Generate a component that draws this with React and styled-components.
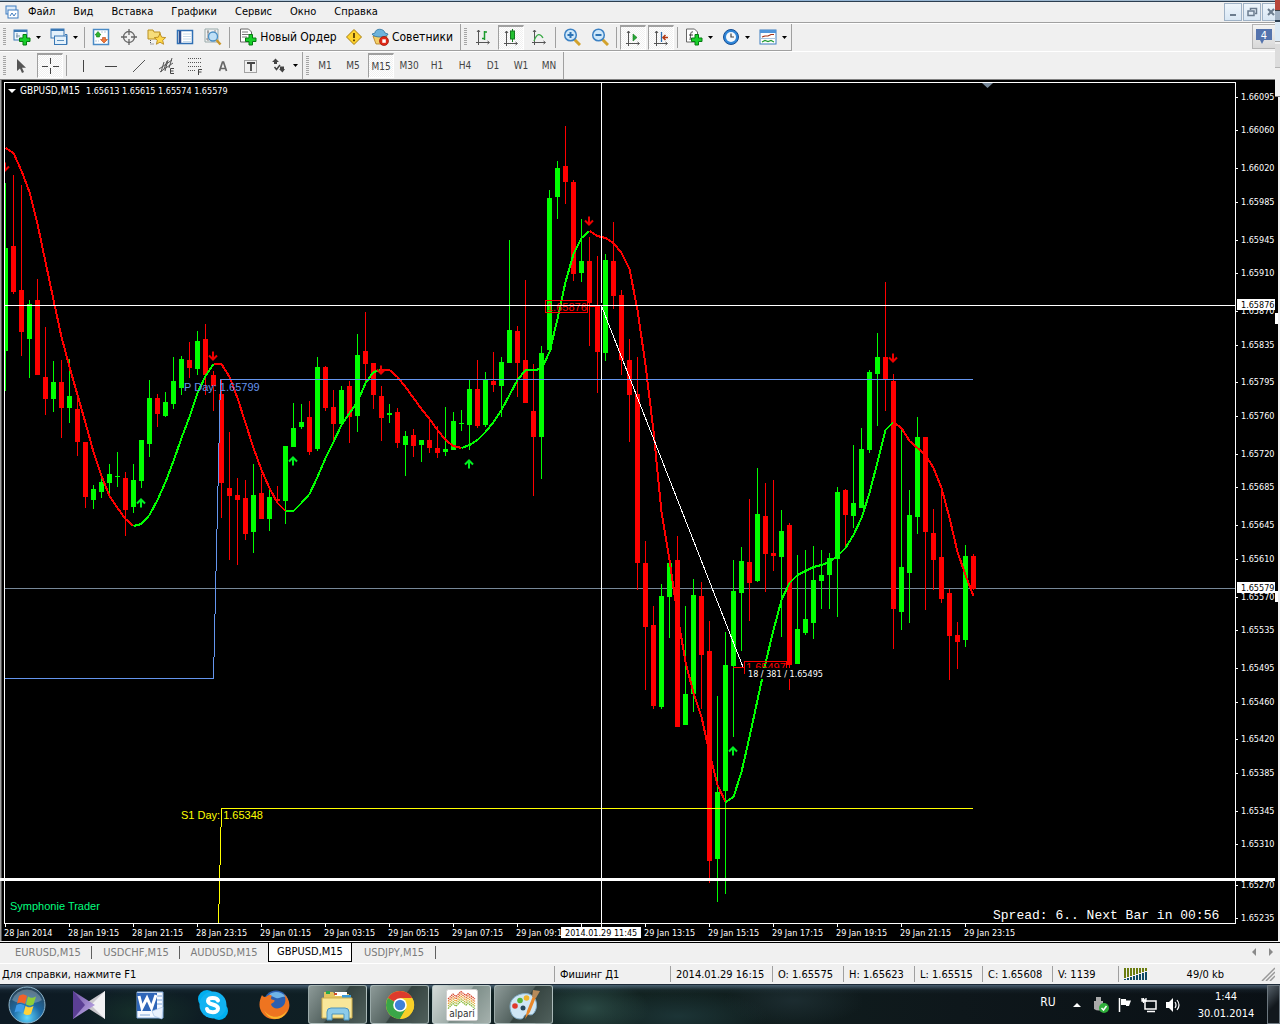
import React from "react";
import styled, { createGlobalStyle, css } from "styled-components";

const UI = '"DejaVu Sans Condensed", "DejaVu Sans", "Noto Sans", sans-serif';
const ARIAL = '"Liberation Sans", Arial, sans-serif';
const MONO = '"Liberation Mono", "Courier New", monospace';

const GlobalStyle = createGlobalStyle`
  *, *::before, *::after { box-sizing: border-box; }
  body { margin: 0; background: #fff; font-family: ${UI}; font-size: 11px; color: #000; }
  button { font: inherit; color: inherit; border: 0; padding: 0; margin: 0; background: none; }
  svg { display: block; flex: none; }
`;

/* ---------- window frame ---------- */

const Desktop = styled.div`
  display: flex;
  flex-direction: column;
  position: relative;
  background: #f0f0f0;
  overflow: hidden;
`;

/* Sliver of the window behind, showing past the right edge. */
const BackWindowEdge = styled.div`
  position: absolute;
  top: 0;
  right: 0;
  width: 5px;
  height: 97px;
  border-bottom: 1px solid #808080;
  background:
    linear-gradient(#b8473c 0 10px, #3a3f45 10px 11px, #9fb0c2 11px 20px, #2c3e50 20px 22px,
      #dbe9f5 22px 41px, #a0a0a0 41px 42px, #f0f0f0 42px 44px, #dcdcdc 44px 67px, #b4b4b4 67px 68px, #f0f0f0 68px);
`;

const TitleEdge = styled.div`
  height: 2px;
  background: linear-gradient(90deg, #9db4c9, #b9cfe2 30%, #8fb3d6 60%, #a9bccb);
  border-bottom: 1px solid #2c3e50;
`;

const MenuBar = styled.nav`
  display: flex;
  align-items: center;
  height: 21px;
  padding-left: 5px;
  border-bottom: 1px solid #a0a0a0;
`;

const MenuItem = styled.button`
  padding: 0 9px;
  line-height: 18px;
  white-space: nowrap;
`;

const MdiButtons = styled.div`
  display: flex;
  gap: 1px;
  margin-left: auto;
`;

const MdiButton = styled.button`
  display: grid;
  place-items: center;
  width: 18px;
  height: 18px;
  border: 1px solid #9fb2c6;
  background: linear-gradient(#eef5fb, #d9e7f4);
`;

/* ---------- toolbars ---------- */

const ToolbarRow = styled.div`
  display: flex;
  justify-content: space-between;
  height: 28px;
  border-top: 1px solid #fff;
`;

const ToolbarGroup = styled.div`
  display: flex;
  align-items: center;
  height: 27px;
  padding-left: 8px;
  border-right: 1px solid #a0a0a0;
  border-bottom: ${(p) => (p.$underlined ? "1px solid #a0a0a0" : "0")};
  position: relative;
  &::before {
    content: "";
    position: absolute;
    left: 3px;
    top: 4px;
    bottom: 4px;
    width: 3px;
    background: repeating-linear-gradient(#a5a5a5 0 1px, transparent 1px 2px);
  }
`;

const Groups = styled.div`
  display: flex;
`;

const pressed = css`
  width: 26px;
  margin: 0 1px;
  background: repeating-conic-gradient(#fff 0 25%, #f0f0f0 0 50%) 0 0 / 2px 2px;
  border: 1px solid #fff;
  border-top: 2px solid #a0a0a0;
  border-left: 1px solid #a0a0a0;
`;

const ToolButton = styled.button`
  display: flex;
  align-items: center;
  justify-content: center;
  gap: ${(p) => (p.$labelled ? 3 : 5)}px;
  width: ${(p) => p.$width || 28}px;
  height: 25px;
  white-space: nowrap;
  font-size: ${(p) => (p.$small ? 10 : 12)}px;
  color: ${(p) => (p.$small ? "#444" : "#000")};
  ${(p) => p.$pressed && pressed}
`;

const Separator = styled.span`
  width: 1px;
  height: 21px;
  margin: 0 2px;
  background: #a0a0a0;
`;

const ChatButton = styled.button`
  display: grid;
  place-items: center;
  width: 28px;
  height: 25px;
  padding-right: 4px;
  border: 1px solid #b4b4b4;
  background: linear-gradient(#f2f2f2, #d8d8d8);
`;

/* ---------- chart window, tabs and status ---------- */

const ChartPane = styled.main`
  border-top: 1px solid #808080;
  background: #000;
  svg { width: 100%; height: auto; }
`;

const TabStrip = styled.div`
  display: flex;
  align-items: flex-start;
  height: 21px;
  padding-left: 4px;
  border-top: 1px solid #000;
`;

const Tab = styled.button`
  position: relative;
  width: ${(p) => (p.$narrow || p.$active ? 84 : 88)}px;
  height: 19px;
  line-height: 18px;
  font-size: 11px;
  white-space: nowrap;
  color: ${(p) => (p.$active ? "#000" : "#7b7b7b")};
  background: ${(p) => (p.$active ? "#fff" : "none")};
  border: ${(p) => (p.$active ? "1px solid #000" : "0")};
  border-top: 0;
  &::after {
    content: "";
    display: ${(p) => (p.$divider ? "block" : "none")};
    position: absolute;
    right: 0;
    top: 3px;
    height: 13px;
    width: 1px;
    background: #606060;
  }
`;

const TabScroll = styled.div`
  display: flex;
  gap: 11px;
  margin: 5px 6px 0 auto;
`;

const StatusBar = styled.footer`
  display: flex;
  align-items: center;
  height: 21px;
  padding-left: 2px;
  border-top: 1px solid #fff;
  font-size: 11px;
`;

const StatusCell = styled.span`
  display: flex;
  align-items: center;
  justify-content: ${(p) => (p.$end ? "flex-end" : "flex-start")};
  width: ${(p) => (p.$width ? p.$width + "px" : "auto")};
  flex: ${(p) => (p.$grow ? "1 1 0" : "none")};
  height: 16px;
  white-space: nowrap;
  border-left: ${(p) => (p.$first ? "0" : "1px solid #a0a0a0")};
  padding: 0 5px 0 ${(p) => (p.$first ? 0 : 5)}px;
`;

/* ---------- Windows taskbar ---------- */

const Taskbar = styled.div`
  display: flex;
  align-items: center;
  height: 40px;
  padding-left: 8px;
  border-top: 1px solid #1c2a38;
  color: #fff;
  background:
    linear-gradient(rgba(120, 150, 180, 0.55), rgba(60, 85, 105, 0.15) 5px, transparent 9px),
    radial-gradient(60px 30px at 46% 60%, #2b4a45, transparent),
    radial-gradient(90px 26px at 53% 80%, #1c3436, transparent),
    radial-gradient(60px 26px at 11% 70%, #16302a, transparent),
    radial-gradient(70px 26px at 62% 40%, #1c2c30, transparent),
    linear-gradient(90deg, #0d1a24, #0f2024 30%, #11211f 50%, #0e171b 75%, #0a1015);
`;

const Pinned = styled.button`
  display: grid;
  place-items: center;
  width: ${(p) => p.$width}px;
  height: 38px;
`;

const Running = styled.button`
  display: grid;
  place-items: center;
  width: 59px;
  height: 39px;
  margin-right: 3px;
  border: 1px solid rgba(200, 215, 215, 0.65);
  border-radius: 3px;
  background: ${(p) =>
    p.$active
      ? "linear-gradient(125deg, #d4dad8, #9fada9 48%, #7b8c87 50%, #a5b1ad)"
      : "linear-gradient(125deg, #8d9a98, #53625f 48%, #34423f 50%, #50605c)"};
`;

const PinnedGroup = styled.div`
  display: flex;
  margin-right: 16px;
`;

const Tray = styled.div`
  display: flex;
  align-items: center;
  margin-left: auto;
  height: 39px;
  font-size: 11px;
`;

const Language = styled.button`
  width: 26px;
  height: 24px;
  margin: 0 4px 6px 0;
  font-size: 12px;
`;

const TrayIcon = styled.button`
  display: grid;
  place-items: center;
  width: 24px;
  height: 24px;
`;

const Clock = styled.time`
  width: 82px;
  line-height: 17px;
  text-align: center;
  white-space: nowrap;
`;

const ShowDesktop = styled.button`
  width: 13px;
  height: 39px;
  border: 1px solid #6d7880;
  background: linear-gradient(135deg, #56616a, #12181d 55%);
`;

/* ---------- toolbar icons ---------- */

const Caret = () => (
  <svg width="5" height="3" viewBox="0 0 5 3"><path d="M0 0h5L2.500 3z" fill="#000" /></svg>
);
const Plus = ({ x, y }) => (
  <path transform={`translate(${x} ${y})`} d="M4 .5h3.500V4H11v3.500H7.500V11H4V7.500H.5V4H4z" fill="#18d02a" stroke="#067a12" />
);
const S = ({ w = 18, h = 18, children }) => (
  <svg width={w} height={h} viewBox={`0 0 ${w} ${h}`} fill="none">{children}</svg>
);
const Axes = () => (
  <path d="M4.500 2v15M2 14.500h13M3 4l1.500-2L6 4M13.500 13l2 1.500-2 1.500" stroke="#555" />
);
const icons = {
  newChart: <S><rect x="1" y="2" width="13" height="10" fill="#eef6fd" stroke="#3a78b5" /><path d="M1 3h13" stroke="#3a78b5" strokeWidth="2" /><path d="M4 5v5M3 8h4" stroke="#7a93a8" /><Plus x={6} y={6} /></S>,
  profiles: <S><path d="M15 6.500h2v10H5V11" stroke="#3a78b5" /><rect x="1" y="1" width="13" height="9" fill="#e4f1fb" stroke="#3a78b5" /><path d="M1 2h13" stroke="#3a78b5" strokeWidth="2" /><rect x="4.500" y="8" width="12" height="8.500" fill="#e4f1fb" stroke="#3a78b5" /><path d="M7 12.500h7" stroke="#5a8fbe" /></S>,
  market: <S><rect x="1.500" y="1.500" width="15" height="15" fill="#fff" stroke="#4a8bc6" strokeWidth="1.500" /><path d="M6 3.500L9 7H7.500v2H4.500V7H3z" fill="#2fb52f" stroke="#158015" strokeWidth=".6" /><path d="M12 15l-3.500-3.500h2v-2h3v2h2z" fill="#f0793a" stroke="#b84312" strokeWidth=".6" /><path d="M9 4h6M3 13h4" stroke="#b9cbd9" strokeDasharray="2 1" /></S>,
  target: <S><circle cx="9" cy="9" r="5.500" stroke="#666" strokeWidth="1.300" /><path d="M9 1v6M9 11v6M1 9h6M11 9h6" stroke="#666" strokeWidth="1.300" /></S>,
  favorites: <S w={20}><path d="M1 2h5l1 2h6v7H1z" fill="#f6dd7a" stroke="#b98f1e" /><path d="M3.500 12v4h4" stroke="#555" strokeDasharray="1 1" /><path d="M13 5.500l1.700 3.700 4 .4-3 2.700.9 4-3.600-2.100-3.600 2.100.9-4-3-2.700 4-.4z" fill="#ffd84a" stroke="#b07f10" strokeWidth=".8" /></S>,
  list: <S><rect x="1.500" y="2.500" width="15" height="13" fill="#fff" stroke="#2f6fb4" strokeWidth="1.500" /><path d="M4 3v12" stroke="#2f4f8f" strokeWidth="2.500" /><path d="M7 6h8M7 8.500h8M7 11h8M7 13.500h8" stroke="#c8dbea" /></S>,
  tester: <S><path d="M1 1h13v13H1z" fill="#f1f1f1" stroke="#9aa" /><path d="M4 2v11M11 2v5M3 4h2M2 11h2" stroke="#888" /><circle cx="9" cy="8.500" r="4.500" fill="#bfe0f7" stroke="#4b8fc5" strokeWidth="1.300" /><path d="M12.500 12l4 4.500" stroke="#c8962a" strokeWidth="2.500" /></S>,
  order: <S><path d="M1.500 1h8l3 3v10h-11z" fill="#fff" stroke="#666" /><path d="M3 4h6M3 6.500h7M3 9h5" stroke="#777" /><Plus x={6} y={6} /></S>,
  warning: <S><path d="M9 1.500L16.500 9 9 16.500 1.500 9z" fill="#ffd42e" stroke="#a87d0c" /><path d="M9 5v5M9 11.500v1.800" stroke="#5a3d00" strokeWidth="1.800" /></S>,
  experts: <S><path d="M2 8l3 8h7l4-8z" fill="#f3cf68" stroke="#b07a1a" strokeWidth=".8" /><path d="M4 5c0-5 9-5 10 0l3 1c0 3.500-14 4.500-16 0z" fill="#6db3dc" stroke="#2c729f" strokeWidth=".8" /><circle cx="13" cy="13" r="4.500" fill="#e02818" stroke="#971208" strokeWidth=".7" /><rect x="11.300" y="11.300" width="3.500" height="3.500" fill="#fff" /></S>,
  bars: <S><Axes /><path d="M10.500 3v9M10.500 4H13M8 10.500h2.500" stroke="#1c9a2c" strokeWidth="1.500" /></S>,
  candles: <S><Axes /><path d="M10.500 0v13" stroke="#157a20" /><rect x="8.500" y="2" width="4" height="8" fill="#22c02f" stroke="#157a20" /></S>,
  line: <S><Axes /><path d="M4 13c3-8 6-8 9-3" stroke="#3aaa46" strokeWidth="1.300" /></S>,
  zoomIn: <S><path d="M11 11l6 6" stroke="#d2a22c" strokeWidth="3" /><circle cx="7.500" cy="7" r="5.800" fill="#cfe8fa" stroke="#3c82c4" strokeWidth="1.500" /><path d="M7.500 4v6M4.500 7h6" stroke="#2d73b5" strokeWidth="2" /></S>,
  zoomOut: <S><path d="M11 11l6 6" stroke="#d2a22c" strokeWidth="3" /><circle cx="7.500" cy="7" r="5.800" fill="#cfe8fa" stroke="#3c82c4" strokeWidth="1.500" /><path d="M4.500 7h6" stroke="#2d73b5" strokeWidth="2" /></S>,
  scroll: <S><Axes /><path d="M9 5v7l4-3.500z" fill="#25a835" stroke="#157a20" strokeWidth=".6" /></S>,
  shift: <S><Axes /><path d="M9.500 3v10" stroke="#2b6fb0" strokeWidth="1.300" /><path d="M11 8.500h5M13.500 6L11 8.500l2.500 2.500" stroke="#b33a14" strokeWidth="1.500" /></S>,
  indicators: <S><path d="M1.500 1h8l3 3v10h-11z" fill="#fff" stroke="#666" /><path d="M8 4c-3-1-2 3-3 8M4 7h4" stroke="#444" /><Plus x={6} y={6} /></S>,
  periods: <S><circle cx="9" cy="9" r="7.500" fill="#2f86d8" stroke="#174f94" /><circle cx="9" cy="9" r="5" fill="#f4f8fc" /><path d="M9 5.500V9h3" stroke="#444" strokeWidth="1.200" /></S>,
  template: <S><rect x="1" y="2" width="16" height="14" fill="#fff" stroke="#3b7cc0" /><path d="M1 3.500h16" stroke="#4f95da" strokeWidth="3" /><path d="M3 9l3-1h3l3-1.500h3" stroke="#a53216" strokeWidth="1.200" /><path d="M1 10.500h16" stroke="#aac6e0" /><path d="M3 14l3-1.500 3 1 3-1 3 1.500" stroke="#239b33" strokeWidth="1.200" /></S>,
  cursor: <S><path d="M4 2v12l3-2.500 2 4.500 2-1-2-4.300h4z" fill="#555" /></S>,
  cross: <S><path d="M9.500 1v6M9.500 11v6M1 9.500h6M12 9.500h6" stroke="#444" /></S>,
  vline: <S><path d="M9.500 3v12" stroke="#444" /></S>,
  hline: <S><path d="M3 9.500h12" stroke="#444" /></S>,
  trend: <S><path d="M3 15L15 3" stroke="#555" /></S>,
  channel: <S w={20} h={18}><path d="M2 12l13-9M3 15L16 6M7 5L4 15M11 3L8 14M15 1l-3 10M10 4l-3 8" stroke="#555" /><path d="M17 11.500h-3.500v5H17M13.500 14h3" stroke="#444" /></S>,
  fibo: <S w={20} h={18}><path d="M3 1.500h14M3 5.500h14M3 9.500h14M3 13.500h8" stroke="#555" strokeDasharray="1 1" /><path d="M17 12.500h-3.500V18M13.500 15h3" stroke="#444" /></S>,
  label: <S><path d="M5.500 14L8.500 5h1l3 9M6.500 11.500h5" stroke="#666" strokeWidth="1.700" /></S>,
  textBox: <S><rect x="2.500" y="3.500" width="12" height="12" stroke="#555" strokeDasharray="1 1" /><path d="M5 6h8M9 6v8" stroke="#444" strokeWidth="1.800" /></S>,
  arrows: <S><path d="M2 5l3.500-3.500L9 5H7v2H4V5zM10 12h5l-2.500 3.500L9 12h1V9.500h4V12z" fill="#444" /><path d="M4.500 10l2 2.500L10 8" stroke="#444" strokeWidth="1.500" /></S>,
};

/* ---------- chart data: [high, low, bodyTop, bodyBottom, rising] every 8px ---------- */

const candles = [
  [183,391,248,351,1],[175,294,246,292,0],[185,356,290,332,0],[300,378,304,339,1],[279,375,300,375,0],
  [327,415,377,399,0],[361,412,382,399,1],[360,438,382,408,0],[359,423,396,408,1],[395,456,409,442,0],
  [442,508,442,497,0],[485,509,489,500,1],[478,498,482,492,1],[464,493,474,483,1],[452,487,476,477,1],
  [472,536,478,510,0],[464,513,480,507,1],[440,488,440,481,1],[380,457,398,444,1],[394,427,398,414,0],
  [392,417,402,416,1],[357,409,381,404,1],[356,395,359,388,1],[342,378,360,368,0],[331,375,341,369,1],
  [324,395,339,375,0],[371,411,375,386,0],[380,518,394,483,0],[432,560,488,496,0],[478,565,495,500,0],
  [480,540,498,534,0],[464,553,495,532,1],[474,519,493,519,0],[488,531,497,519,1],[486,501,499,501,0],
  [446,524,446,501,1],[403,447,428,447,1],[404,429,422,427,1],[401,455,417,452,0],[357,451,367,449,1],
  [366,411,367,408,0],[390,440,407,424,0],[386,427,390,424,1],[381,443,386,417,0],[334,432,355,416,1],
  [312,381,351,364,0],[363,409,363,395,0],[386,441,396,418,0],[404,423,413,415,1],[408,448,412,443,0],
  [431,476,436,445,1],[429,457,435,446,0],[440,462,440,445,1],[419,453,440,448,0],[426,458,448,453,0],
  [407,456,449,452,1],[412,450,421,450,1],[410,431,423,424,1],[380,450,389,425,1],[360,428,389,426,0],
  [372,427,380,425,1],[352,392,381,385,0],[357,417,362,386,1],[240,363,330,363,1],[326,397,331,363,0],
  [280,403,360,403,0],[364,496,411,437,0],[346,479,353,437,1],[190,352,198,350,1],[161,219,168,197,1],
  [126,204,166,182,0],[180,281,182,274,0],[219,282,261,273,1],[237,346,261,303,0],[256,393,306,352,0],
  [254,361,260,353,1],[222,309,261,296,0],[290,375,295,360,0],[339,442,360,395,0],[357,590,394,563,0],
  [541,690,563,627,0],[606,709,625,706,0],[584,709,596,707,1],[560,638,563,597,1],[536,727,560,727,0],
  [606,725,694,725,1],[579,712,595,694,1],[582,709,596,655,0],[621,883,651,861,0],[696,902,792,859,1],
  [632,894,665,791,1],[560,737,591,666,1],[547,651,561,593,1],[499,621,562,583,0],[468,582,514,581,1],
  [483,592,516,554,0],[480,571,553,556,0],[510,637,531,557,1],[523,690,525,665,0],[555,664,629,664,1],
  [550,635,619,633,1],[546,639,580,623,1],[550,609,575,581,1],[553,609,558,575,1],[487,617,492,559,1],
  [489,546,490,515,0],[445,528,503,516,1],[428,508,449,508,1],[370,453,372,450,1],[333,426,357,374,1],
  [282,411,357,380,0],[374,649,381,609,0],[429,630,567,612,1],[490,623,515,573,1],[417,534,437,517,1],
  [437,610,437,532,0],[509,590,533,560,0],[489,603,557,599,0],[589,680,593,636,0],[622,669,635,642,0],
  [545,647,556,640,1],[554,590,556,589,0],
];

/* Moving-average values per bar; a segment's colour changes where the trend turns. */
const average = [
  [0, "#f00", [148,153,171,192,224,262,300,337,367,395,423,452,476,496,508,519,526]],
  [16, "#0f0", [526,524,515,500,482,461,438,417,393,376,364]],
  [26, "#f00", [364,364,377,398,423,448,470,488,503,511]],
  [35, "#0f0", [511,511,503,494,477,458,442,425,413,402,383,372,370]],
  [47, "#f00", [370,370,377,387,398,409,419,430,440,446,448]],
  [57, "#0f0", [448,445,440,432,422,410,395,380,370,370,369,352,319,282,254,238,231]],
  [73, "#f00", [231,236,238,243,253,269,310,365,431,512,560,615,662,693,717,753,785,802]],
  [90, "#0f0", [802,797,772,737,700,663,630,600,583,575,571,567,565,562,556,548,535,518,493,462,430,422]],
  [111, "#f00", [422,428,441,448,455,468,488,518,552,575,596]],
];

const prices = [
  [97,"1.66095"],[130,"1.66060"],[168,"1.66020"],[202,"1.65985"],[240,"1.65945"],[273,"1.65910"],
  [311,"1.65870"],[345,"1.65835"],[382,"1.65795"],[416,"1.65760"],[454,"1.65720"],[487,"1.65685"],
  [525,"1.65645"],[559,"1.65610"],[597,"1.65570"],[630,"1.65535"],[668,"1.65495"],[702,"1.65460"],
  [739,"1.65420"],[773,"1.65385"],[811,"1.65345"],[844,"1.65310"],[885,"1.65270"],[918,"1.65235"],
];

const times = [
  "28 Jan 2014","28 Jan 19:15","28 Jan 21:15","28 Jan 23:15","29 Jan 01:15","29 Jan 03:15","29 Jan 05:15",
  "29 Jan 07:15","29 Jan 09:15","","29 Jan 13:15","29 Jan 15:15","29 Jan 17:15","29 Jan 19:15","29 Jan 21:15","29 Jan 23:15",
];

const signals = [[5,167,0],[213,356,0],[381,370,0],[589,221,0],[893,358,0],[141,503,1],[293,461,1],[469,464,1],[733,751,1]];

const barX = (i) => 5 + i * 8;

const AxisText = styled.text`
  font: ${(p) => p.$size || 9}px ${UI};
  fill: ${(p) => p.$color || "#fff"};
`;
const NoteText = styled.text`
  font: 11px ${ARIAL};
  fill: ${(p) => p.$color};
`;
const SpreadText = styled.text`
  font: 13px ${MONO};
  fill: #fff;
`;

function Signal({ x, y, up }) {
  return (
    <path
      d="M0-4.500V3.500M-4-.5L0 3.500 4-.5"
      transform={`translate(${x} ${y}) scale(1 ${up ? -1 : 1})`}
      stroke={up ? "#00f020" : "#f00000"}
      strokeWidth="2"
      fill="none"
    />
  );
}

function Chart() {
  return (
    <svg viewBox="0 80 1280 862" role="img" aria-label="GBPUSD,M15">
      <rect x="0" y="80" width="1280" height="862" fill="#000" />
      <rect x="0" y="80" width="1" height="862" fill="#a0a0a0" />
      <rect x="1" y="80" width="1" height="862" fill="#505050" />
      <defs><clipPath id="plot"><rect x="5" y="83" width="1230" height="840" /></clipPath></defs>

      <g shapeRendering="crispEdges">
        <path d="M5 588.500H1235" stroke="#778899" />
        <g clipPath="url(#plot)">
          {candles.map(([high, low, top, bottom, up], i) => (
            <g key={i} fill={up ? "#0f0" : "#f00"}>
              <rect x={barX(i)} y={high} width="1" height={low - high} />
              <rect x={barX(i) - 2} y={top} width="5" height={bottom - top} />
            </g>
          ))}
          {average.map(([start, color, values]) => (
            <polyline
              key={start}
              points={values.map((v, i) => `${barX(start + i) + 0.5},${v}`).join(" ")}
              fill="none"
              stroke={color}
              strokeWidth="2"
            />
          ))}
          <path d="M5 678.500H213.500L220.500 379.500H973" fill="none" stroke="#6495ed" />
          <path d="M218.500 923L221.500 808.500H973" fill="none" stroke="#ff0" />
        </g>
        <path d="M589 306.500H600M733 667.500H745" stroke="#f00" />
        <rect x="545.500" y="300.500" width="42" height="12" fill="none" stroke="#f00" />
        <rect x="744.500" y="661.500" width="42" height="12" fill="none" stroke="#f00" />
      </g>

      <g clipPath="url(#plot)">
        {signals.map(([x, y, up]) => <Signal key={x} x={x} y={y} up={up} />)}
      </g>
      <NoteText $color="#f00" x="547" y="311">1.65876</NoteText>
      <NoteText $color="#f00" x="746" y="671">1.65497</NoteText>
      <NoteText $color="#6495ed" x="184" y="391">P Day: 1.65799</NoteText>
      <NoteText $color="#ff0" x="181" y="819">S1 Day: 1.65348</NoteText>
      <NoteText $color="#00ff7f" x="10" y="910">Symphonie Trader</NoteText>
      <SpreadText x="993" y="919">Spread: 6.. Next Bar in 00:56</SpreadText>

      <g shapeRendering="crispEdges">
        <path d="M4.500 923.500V82.500H1235.500V923.500Z" fill="none" stroke="#fff" />
        <path d="M601.500 83V303M601.500 306V930M5 305.500H1235" stroke="#fff" />
        <path d="M601.500 306L743 667" stroke="#fff" />
        {prices.map(([y]) => <rect key={y} x="1236" y={y} width="2" height="1" fill="#fff" />)}
        {times.map((t, i) => <rect key={i} x={5 + i * 64} y="924" width="1" height="3" fill="#fff" />)}
      </g>
      <path d="M982 83h11l-5.500 5z" fill="#778899" />
      <path d="M8 89h8l-4 4z" fill="#fff" />
      <AxisText $size={10} x="20" y="94">GBPUSD,M15</AxisText>
      <AxisText x="86" y="94">1.65613 1.65615 1.65574 1.65579</AxisText>

      {prices.map(([y, label]) => <AxisText key={y} x="1241" y={y + 3}>{label}</AxisText>)}
      {times.map((t, i) => <AxisText key={i} x={4 + i * 64} y="936">{t}</AxisText>)}

      <rect x="1237" y="299" width="38" height="11" fill="#fff" />
      <AxisText $color="#000" x="1241" y="308">1.65876</AxisText>
      <rect x="1237" y="582" width="38" height="11" fill="#fff" />
      <AxisText $color="#000" x="1241" y="591">1.65579</AxisText>
      <rect x="1275" y="313" width="3" height="11" fill="#fff" />
      <rect x="1275" y="591" width="3" height="11" fill="#fff" />
      <rect x="561" y="927" width="80" height="11" fill="#fff" />
      <AxisText $color="#000" x="565" y="936">2014.01.29 11:45</AxisText>
      <rect x="745" y="668" width="83" height="11" fill="#000" />
      <AxisText x="748" y="677">18 / 381 / 1.65495</AxisText>

      <rect x="0" y="878" width="1275" height="3" fill="#fff" />
      <rect x="1278" y="97" width="2" height="845" fill="#f0f0f0" />
      <rect x="0" y="941" width="1280" height="1" fill="#f4f4f4" />
    </svg>
  );
}

/* ---------- taskbar icons ---------- */

const StartOrb = () => (
  <svg width="38" height="38" viewBox="0 0 38 38">
    <defs><radialGradient id="orb" cx=".5" cy=".85" r=".8"><stop offset="0" stopColor="#5fd8ff" /><stop offset=".5" stopColor="#1d6aa5" /><stop offset="1" stopColor="#2a4458" /></radialGradient></defs>
    <circle cx="19" cy="19" r="18" fill="url(#orb)" stroke="#8fb6cc" />
    <path d="M4 14a16 16 0 0 1 30 0c-8 5-22 5-30 0z" fill="#fff" opacity=".25" />
    <path d="M11 10c3-2 5-2 8 0l-2 8c-3-2-5-2-8-.5z" fill="#f2622a" />
    <path d="M20 10.500c3 2 5 1.500 8 0l-2.500 8c-2 1.500-5 1.500-7.500 0z" fill="#8fce3a" />
    <path d="M8.500 19c3-1.500 5-1.500 8 .5l-2 7.500c-3-2-5-2-8-.5z" fill="#3f9be8" />
    <path d="M17.500 20c3 2 5 1.500 8 0l-2.500 8c-2 1.500-5 1.500-7.500-.5z" fill="#ffd23a" />
  </svg>
);
const KmPlayer = () => (
  <svg width="32" height="28" viewBox="0 0 32 28">
    <defs><linearGradient id="km" x1="0" y1="0" x2="1" y2="1"><stop offset="0" stopColor="#6a4fa0" /><stop offset="1" stopColor="#c9b4f0" /></linearGradient></defs>
    <path d="M32 0v28L10 14z" fill="#c9c6cc" /><path d="M32 0v28L18 14z" fill="#f2f1f3" />
    <path d="M0 0l22 14L0 28z" fill="url(#km)" /><path d="M0 0v28L12 14z" fill="#5b3f94" />
  </svg>
);
const Word = () => (
  <svg width="30" height="30" viewBox="0 0 30 30">
    <path d="M2 2h26v26H2z" fill="#f5f9ff" stroke="#7fa6d8" />
    <path d="M22 6h5M22 10h5M22 14h5M5 25h10" stroke="#7fa6d8" /><path d="M2 3h20v18H2z" fill="#2f66b8" />
    <path d="M4 6l3 12L12 8l4.500 10L21 5" fill="none" stroke="#fff" strokeWidth="3" />
    <path d="M17 21l11-4-1 12-8-3z" fill="#e9f1fc" stroke="#9dbce0" strokeWidth=".6" />
  </svg>
);
const Skype = () => (
  <svg width="32" height="32" viewBox="0 0 32 32">
    <circle cx="10" cy="10" r="9" fill="#00aff0" /><circle cx="22" cy="22" r="9" fill="#00aff0" /><circle cx="16" cy="16" r="13.500" fill="#12b3f2" />
    <path d="M21 11.500c-1-3-10-4-10 .5 0 4.500 10 2.500 10 7.500 0 5-10 4.500-11 .5" fill="none" stroke="#fff" strokeWidth="4" strokeLinecap="round" />
  </svg>
);
const Firefox = () => (
  <svg width="32" height="32" viewBox="0 0 32 32">
    <circle cx="17" cy="14" r="12.500" fill="#2b5fb0" /><path d="M10 6c5-5 13-3 17 2-5-1-6 2-10 1z" fill="#6fb4e8" />
    <path d="M3 6c1 2 3 2 4 2 3-3 5-2 6-1-2 2-1 4 2 4 2 1-1 3-3 4 1 5 8 6 12 2 3-3 3-8 1-12 5 4 7 11 4 17-5 10-19 11-25 3C-1 19 0 12 3 6z" fill="#ee7420" />
    <path d="M5 21c5 9 18 9 23 0-3 11-18 13-23 0z" fill="#f9b52c" />
  </svg>
);
const Explorer = () => (
  <svg width="34" height="32" viewBox="0 0 34 32">
    <path d="M3 3h9l2 2h14v24H3z" fill="#e2c35f" /><path d="M5 2h4v3H5z" fill="#2aa84a" /><path d="M14 3h12v4H14z" fill="#fff" /><path d="M13 4h3v2h-3z" fill="#d04a2a" /><path d="M21 6h9v3h-9z" fill="#3a9ad8" />
    <path d="M1 9h30v20H1z" fill="#f8e79a" stroke="#cfae4c" /><path d="M6 31V23q0-4 4-4h14q4 0 4 4v8h-5v-6H11v6z" fill="#8ccbea" stroke="#4c94bd" />
  </svg>
);
const Chrome = () => (
  <svg width="30" height="30" viewBox="0 0 30 30">
    <circle cx="15" cy="15" r="14" fill="#f8cf28" /><path d="M15 15L2.900 8A14 14 0 0 1 27.200 8z" fill="#dd3b2c" /><path d="M15 15L2.900 8A14 14 0 0 0 15 29l6-10.500z" fill="#3aa648" />
    <path d="M15 8h12.200A14 14 0 0 1 15 29l6-10z" fill="#f8cf28" /><circle cx="15" cy="15" r="6.800" fill="#fff" /><circle cx="15" cy="15" r="5.200" fill="#3f80d8" />
  </svg>
);
const AlpariLabel = styled.text`
  font: 10px ${UI};
  fill: #333;
`;
const Alpari = () => (
  <svg width="32" height="32" viewBox="0 0 32 32">
    <rect x=".5" y=".5" width="31" height="31" rx="2" fill="#fff" stroke="#cfcfcf" />
    {["#d8432a", "#e2702c", "#e8a02e", "#b8b83a", "#86b83a"].map((c, i) => (
      <path key={c} d={`M2 ${10 + i * 2.4}l5-5 3 2.500 5-5 5 4 2-2 7 5.500`} fill="none" stroke={c} strokeWidth="1.200" strokeDasharray="1.600 .6" />
    ))}
    <rect x="1" y="20" width="30" height="11" fill="#fff" />
    <AlpariLabel x="16" y="28" textAnchor="middle">alpari</AlpariLabel>
  </svg>
);
const Paint = () => (
  <svg width="34" height="34" viewBox="0 0 34 34">
    <path d="M3 18C3 9 14 4 22 6c9 3 9 14 5 19-3 4-6 0-9 2-2 2-1 4-5 4C6 31 3 25 3 18z" fill="#cfe6f5" stroke="#7fa9c4" />
    <circle cx="8" cy="18" r="2.800" fill="#e0392c" /><circle cx="13" cy="12.500" r="2.800" fill="#56b13a" /><circle cx="19.500" cy="10" r="2.800" fill="#f2b52c" /><circle cx="16" cy="20" r="2.500" fill="#27475c" />
    <path d="M18 31l2-8 6-15 3 1-6 15z" fill="#e8872a" /><path d="M25 9l1-7 7 1-4 7z" fill="#b78a5a" />
  </svg>
);

/* ---------- page ---------- */

const menus = ["Файл", "Вид", "Вставка", "Графики", "Сервис", "Окно", "Справка"];
const frames = ["M1", "M5", "M15", "M30", "H1", "H4", "D1", "W1", "MN"];

const Tool = ({ name, icon, caret, ...rest }) => (
  <ToolButton aria-label={name} {...rest}>{icons[icon]}{caret && <Caret />}</ToolButton>
);

export default function App() {
  return (
    <>
      <GlobalStyle />
      <Desktop>
        <TitleEdge />
        <MenuBar>
          <S w={14} h={14}><rect x="1" y="1" width="10" height="8" fill="#dceaf8" stroke="#3f7cc0" /><rect x="3" y="5" width="10" height="8" fill="#fff" stroke="#3f7cc0" /><path d="M5 11l2-3 2 3 2-3" stroke="#3f7cc0" /></S>
          {menus.map((m) => <MenuItem key={m}>{m}</MenuItem>)}
          <MdiButtons>
            <MdiButton aria-label="Minimize"><S w={12} h={12}><path d="M3 9h6" stroke="#6b7c8e" strokeWidth="2" /></S></MdiButton>
            <MdiButton aria-label="Restore"><S w={12} h={12}><path d="M4.500 4V2.500h6v5H9" stroke="#6b7c8e" strokeWidth="1.500" /><rect x="2" y="5" width="6" height="4.500" stroke="#6b7c8e" strokeWidth="1.500" /></S></MdiButton>
            <MdiButton aria-label="Close"><S w={12} h={12}><path d="M3 3l6 6M9 3l-6 6" stroke="#6b7c8e" strokeWidth="2" /></S></MdiButton>
          </MdiButtons>
        </MenuBar>

        <ToolbarRow>
          <Groups>
            <ToolbarGroup $underlined>
              <Tool name="New chart" icon="newChart" caret $width={37} />
              <Tool name="Profiles" icon="profiles" caret $width={37} />
              <Separator />
              <Tool name="Market watch" icon="market" />
              <Tool name="Data window" icon="target" />
              <Tool name="Navigator" icon="favorites" />
              <Tool name="Terminal" icon="list" />
              <Tool name="Strategy tester" icon="tester" />
              <Separator />
              <ToolButton $labelled $width={112}>{icons.order}Новый Ордер</ToolButton>
              <Tool name="MetaEditor" icon="warning" $width={20} />
              <ToolButton $labelled $width={96}>{icons.experts}Советники</ToolButton>
            </ToolbarGroup>
            <ToolbarGroup $underlined>
              <Tool name="Bar chart" icon="bars" />
              <Tool name="Candlesticks" icon="candles" $pressed />
              <Tool name="Line chart" icon="line" />
              <Separator />
              <Tool name="Zoom in" icon="zoomIn" />
              <Tool name="Zoom out" icon="zoomOut" />
              <Separator />
              <Tool name="Auto scroll" icon="scroll" $pressed />
              <Tool name="Chart shift" icon="shift" $pressed />
              <Separator />
              <Tool name="Indicators" icon="indicators" caret $width={37} />
              <Tool name="Periods" icon="periods" caret $width={37} />
              <Tool name="Templates" icon="template" caret $width={37} />
            </ToolbarGroup>
          </Groups>
          <ChatButton aria-label="Messages: 4">
            <svg width="18" height="17" viewBox="0 0 18 17"><path d="M1 1h16v11H9l-2 4-2-4H1z" fill="#5473ad" /><AxisText $size={11} x="9" y="11" textAnchor="middle">4</AxisText></svg>
          </ChatButton>
        </ToolbarRow>

        <ToolbarRow>
          <Groups>
            <ToolbarGroup>
              <Tool name="Cursor" icon="cursor" />
              <Tool name="Crosshair" icon="cross" $pressed />
              <Separator />
              <Tool name="Vertical line" icon="vline" />
              <Tool name="Horizontal line" icon="hline" />
              <Tool name="Trendline" icon="trend" />
              <Tool name="Channel" icon="channel" />
              <Tool name="Fibonacci" icon="fibo" />
              <Tool name="Text" icon="label" />
              <Tool name="Text label" icon="textBox" />
              <Tool name="Arrows" icon="arrows" caret $width={37} />
            </ToolbarGroup>
            <ToolbarGroup>
              {frames.map((f) => <ToolButton key={f} $small $pressed={f === "M15"}>{f}</ToolButton>)}
            </ToolbarGroup>
          </Groups>
        </ToolbarRow>

        <ChartPane><Chart /></ChartPane>

        <TabStrip>
          <Tab $divider>EURUSD,M15</Tab>
          <Tab $divider>USDCHF,M15</Tab>
          <Tab>AUDUSD,M15</Tab>
          <Tab $active>GBPUSD,M15</Tab>
          <Tab $divider $narrow>USDJPY,M15</Tab>
          <TabScroll>
            <button aria-label="Scroll left"><S w={6} h={8}><path d="M5 0v8L1 4z" fill="#8a8a8a" /></S></button>
            <button aria-label="Scroll right"><S w={6} h={8}><path d="M1 0v8l4-4z" fill="#8a8a8a" /></S></button>
          </TabScroll>
        </TabStrip>

        <StatusBar>
          <StatusCell $first $grow>Для справки, нажмите F1</StatusCell>
          <StatusCell $width={116}>Фишинг Д1</StatusCell>
          <StatusCell $width={102}>2014.01.29 16:15</StatusCell>
          <StatusCell $width={71}>O: 1.65575</StatusCell>
          <StatusCell $width={71}>H: 1.65623</StatusCell>
          <StatusCell $width={68}>L: 1.65515</StatusCell>
          <StatusCell $width={70}>C: 1.65608</StatusCell>
          <StatusCell $width={66}>V: 1139</StatusCell>
          <StatusCell $width={44}>
            <S w={24} h={12}>
              {Array.from({ length: 8 }, (_, i) => (
                <g key={i}><rect x={i * 3} y="0" width="2" height={10 - i} fill="#6b7d10" /><rect x={i * 3} y={11 - i} width="2" height={1 + i} fill="#0d4a66" /></g>
              ))}
            </S>
          </StatusCell>
          <StatusCell $first $end $width={67}>49/0 kb</StatusCell>
          <StatusCell $first $end $width={51}>
            <S w={14} h={14}><path d="M1 14L14 1M5 14l9-9M9 14l5-5" stroke="#999" strokeWidth="1.500" /></S>
          </StatusCell>
        </StatusBar>

        <Taskbar>
          <PinnedGroup>
            <Pinned $width={38} aria-label="Start"><StartOrb /></Pinned>
            <Pinned $width={86} aria-label="KMPlayer"><KmPlayer /></Pinned>
            <Pinned $width={36} aria-label="Word"><Word /></Pinned>
            <Pinned $width={90} aria-label="Skype"><Skype /></Pinned>
            <Pinned $width={34} aria-label="Firefox"><Firefox /></Pinned>
          </PinnedGroup>
          <Running aria-label="Explorer"><Explorer /></Running>
          <Running aria-label="Chrome"><Chrome /></Running>
          <Running $active aria-label="Alpari"><Alpari /></Running>
          <Running aria-label="Paint"><Paint /></Running>
          <Tray>
            <Language>RU</Language>
            <TrayIcon aria-label="Show hidden icons"><S w={8} h={4}><path d="M0 4h8L4 0z" fill="#fff" /></S></TrayIcon>
            <TrayIcon aria-label="Safely remove hardware"><S w={16} h={16}><path d="M3 0h5v4H3zM1 4h9v8q-4 3-9 0z" fill="#a9a9a9" /><circle cx="11" cy="11" r="5" fill="#2fae3a" /><path d="M8.500 11l2 2 3-4" stroke="#fff" strokeWidth="1.500" /></S></TrayIcon>
            <TrayIcon aria-label="Action center"><S w={16} h={16}><path d="M2.500 1v14" stroke="#fff" strokeWidth="1.500" /><path d="M4 2h5v1.500h5L12 9H9V8H4z" fill="#fff" /></S></TrayIcon>
            <TrayIcon aria-label="Network"><S w={16} h={16}><rect x="4" y="4" width="11" height="8" stroke="#fff" strokeWidth="1.500" /><path d="M6 14.500h8M2.500 1v5M1 3h4M1 1v3h4V1" stroke="#fff" strokeWidth="1.300" /></S></TrayIcon>
            <TrayIcon aria-label="Volume"><S w={16} h={16}><path d="M1 5h3l4-4v14l-4-4H1z" fill="#fff" /><path d="M10 5q2 3 0 6M12 3q4 5 0 10" stroke="#fff" strokeWidth="1.200" /></S></TrayIcon>
            <Clock><div>1:44</div><div>30.01.2014</div></Clock>
            <ShowDesktop aria-label="Show desktop" />
          </Tray>
        </Taskbar>
        <BackWindowEdge />
      </Desktop>
    </>
  );
}
